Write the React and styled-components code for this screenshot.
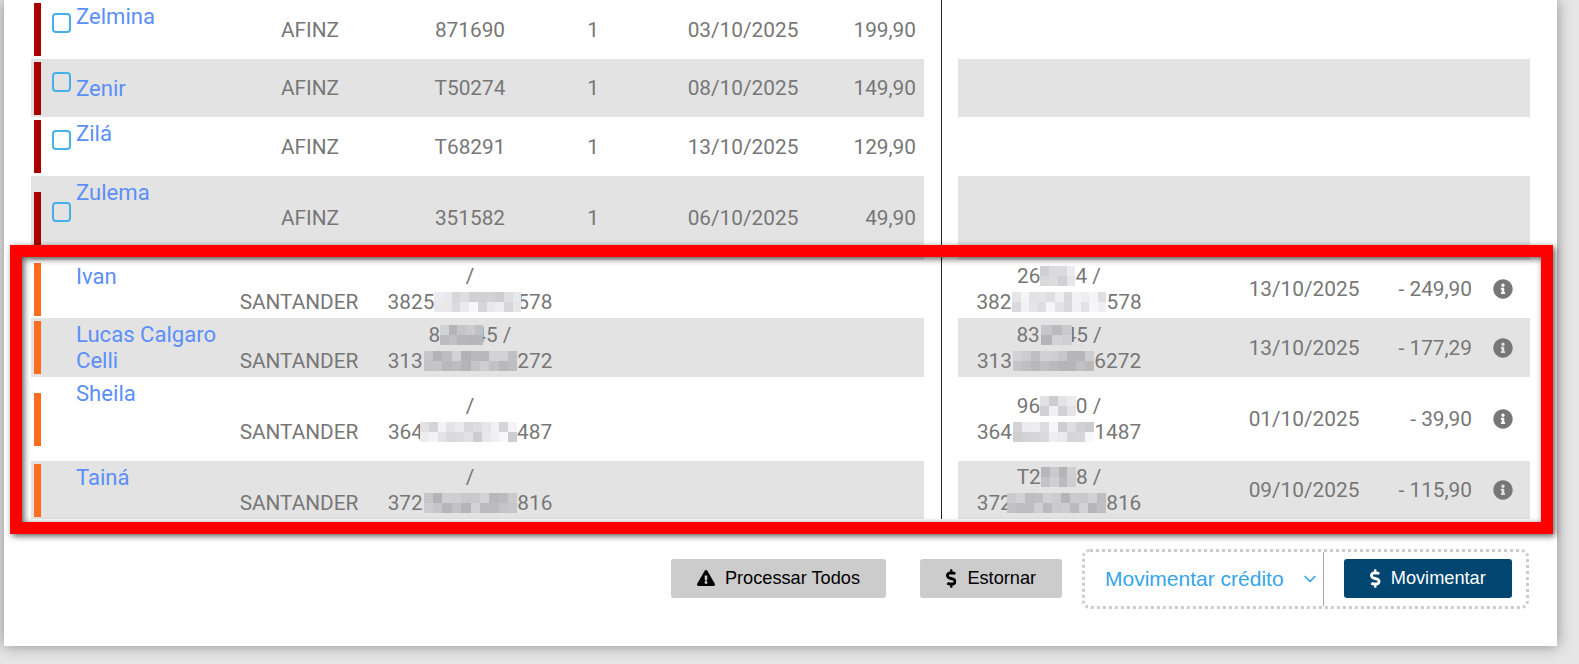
import React from 'react';
import styled, { createGlobalStyle } from 'styled-components';
import { FaExclamationTriangle, FaDollarSign, FaInfoCircle } from 'react-icons/fa';
import { FiChevronDown } from 'react-icons/fi';

const GlobalStyle = createGlobalStyle`
  html, body {
    margin: 0;
    padding: 0;
    height: 664px;
    overflow: hidden;
    background: #e6e6e6;
  }
`;

const Page = styled.div`
  height: 664px;
  padding-left: 4px;
  overflow: hidden;
  box-sizing: border-box;
  background: #e6e6e6;
`;

const Card = styled.div`
  width: 1553px;
  height: 646px;
  padding-left: 27px;
  box-sizing: border-box;
  background: #fff;
  box-shadow: 0 0 14px rgba(0, 0, 0, 0.4);
  font-family: Roboto, 'Liberation Sans', sans-serif;
  font-size: 20.8px;
  line-height: 26px;
  color: #777;
`;

const Rows = styled.div`
  position: relative;
  width: 1499px;
`;

const Row = styled.div`
  display: grid;
  grid-template-columns: 893px 34px 572px;
  height: ${(p) => p.$height}px;
`;

const LeftCell = styled.div`
  display: grid;
  grid-template-columns: 7px 35px 150px 146px 196px 50px 230px 68px;
  padding-left: 3px;
  background: ${(p) => (p.$alt ? '#e3e3e3' : 'transparent')};
`;

const Divider = styled.div`
  margin-left: 17px;
  width: 1px;
  background: #222;
`;

const RightCell = styled.div`
  display: grid;
  grid-template-columns: 202px 224px 88px 58px;
  background: ${(p) => (p.$alt ? '#e3e3e3' : 'transparent')};
`;

const Marker = styled.div`
  align-self: center;
  height: 53px;
  background: ${(p) => p.$color};
`;

const CheckSlot = styled.div`
  padding: ${(p) => p.$top}px 0 0 11px;
`;

const CheckBox = styled.div`
  width: 19px;
  height: 20px;
  box-sizing: border-box;
  border: 2px solid #45b1e8;
  border-radius: 4px;
`;

const Name = styled.a`
  display: block;
  padding-top: ${(p) => p.$top}px;
  color: #5b8ff9;
  font-size: 22.1px;
`;

const Middle = styled.div`
  align-self: center;
  text-align: center;
`;

const BankText = styled(Middle)`
  display: flex;
  justify-content: center;
  align-items: flex-end;
  min-height: ${(p) => p.$lines * 26}px;
  padding-left: ${(p) => (p.$lines === 1 ? 22 : 0)}px;
`;

const DateText = styled(Middle)`
  padding-left: ${(p) => p.$pad}px;
`;

const Value = styled.div`
  align-self: center;
  text-align: right;
  white-space: nowrap;
`;

const InfoSlot = styled.div`
  align-self: center;
  display: flex;
  padding-left: 20.5px;
  font-size: 20px;
  color: #777;
`;

const Line = styled.div`
  white-space: nowrap;
`;

const Mosaic = styled.span`
  display: inline-grid;
  grid-auto-flow: column;
  grid-template-rows: repeat(2, 1fr);
  grid-auto-columns: 1fr;
  position: relative;
  z-index: 1;
  width: ${(p) => p.$w}px;
  height: 20px;
  margin: 3px ${(p) => p.$mr || 0}px 0 ${(p) => p.$ml || 0}px;
  vertical-align: top;
`;

const Frame = styled.div`
  position: absolute;
  left: -21px;
  top: 245px;
  width: 1543px;
  height: 289px;
  box-sizing: border-box;
  border: 12px solid #ff0000;
  filter: drop-shadow(2px 2px 3px rgba(0, 0, 0, 0.65));
  pointer-events: none;
`;

const Footer = styled.div`
  display: flex;
  align-items: center;
  justify-content: flex-end;
  width: 1498px;
  margin-top: 30px;
`;

const Button = styled.button`
  display: flex;
  align-items: center;
  justify-content: center;
  gap: ${(p) => p.$gap}px;
  width: ${(p) => p.$w}px;
  height: 39px;
  margin: 0 ${(p) => p.$mr || 0}px 2px 0;
  padding: 0;
  border: 0;
  border-radius: 3px;
  background: ${(p) => (p.$primary ? '#004670' : '#cccccc')};
  color: ${(p) => (p.$primary ? '#fff' : '#000')};
  font-family: 'Liberation Sans', Arial, sans-serif;
  font-size: 18.2px;
`;

const DollarIcon = styled(FaDollarSign)`
  width: 10.5px;
  height: 19px;
`;

const WarnIcon = styled(FaExclamationTriangle)`
  width: 18px;
  height: 16px;
`;

const Dotted = styled.div`
  display: flex;
  align-items: stretch;
  width: 447px;
  height: 60px;
  box-sizing: border-box;
  border: 3px dotted #cccccc;
  border-radius: 8px;
`;

const SelectBox = styled.div`
  display: flex;
  align-items: center;
  justify-content: space-between;
  width: 239px;
  padding: 0 3px 0 20px;
  box-sizing: border-box;
  border-right: 1px solid #aaa;
  color: #35a6e8;
  font-family: 'Liberation Sans', Arial, sans-serif;
  font-size: 21px;
  svg {
    font-size: 20px;
  }
`;

const ButtonSlot = styled.div`
  display: flex;
  align-items: center;
  padding-left: 20px;
`;

const RED = '#a80000';
const ORANGE = '#ff6c1f';

const m = (w, ml, mr) => ({ w, ml, mr });

const rows = [
  { height: 59, color: RED, check: 13, nameTop: 3, name: 'Zelmina', bank: 'AFINZ', number: [['871690']], qty: '1', date: '03/10/2025', value: '199,90' },
  { height: 58, alt: true, color: RED, check: 13, nameTop: 16, name: 'Zenir', bank: 'AFINZ', number: [['T50274']], qty: '1', date: '08/10/2025', value: '149,90' },
  { height: 59, color: RED, check: 13, nameTop: 3, name: 'Zilá', bank: 'AFINZ', number: [['T68291']], qty: '1', date: '13/10/2025', value: '129,90' },
  { height: 84, alt: true, color: RED, check: 26, nameTop: 3, name: 'Zulema', bank: 'AFINZ', number: [['351582']], qty: '1', date: '06/10/2025', value: '49,90' },
  {
    height: 58, color: ORANGE, nameTop: 3, name: 'Ivan', bank: 'SANTANDER',
    number: [['/'], ['3825', m(87, 0, -4), '578']],
    payment: { number: [['26', m(35), '4 /'], ['382', m(94.5, 0.5, 0), '578']], date: '13/10/2025', value: '- 249,90' },
  },
  {
    height: 59, alt: true, color: ORANGE, nameTop: 3, name: 'Lucas Calgaro Celli', bank: 'SANTANDER',
    number: [['8', m(43, 0, -9), '45 /'], ['313', m(93.6, 1, 0), '272']],
    payment: { number: [['83', m(31, 1.7, -8), '45 /'], ['313', m(81.4, 1), '6272']], date: '13/10/2025', value: '- 177,29' },
  },
  {
    height: 84, color: ORANGE, nameTop: 3, name: 'Sheila', bank: 'SANTANDER',
    number: [['/'], ['364', m(97, -3), '487']],
    payment: { number: [['96', m(35.7, 0, 0), '0 /'], ['364', m(81.4, 1), '1487']], date: '01/10/2025', value: '- 39,90' },
  },
  {
    height: 58, alt: true, color: ORANGE, nameTop: 3, name: 'Tainá', bank: 'SANTANDER',
    number: [['/'], ['372', m(93.6, 1, 0), '816']],
    payment: { number: [['T2', m(34.7, 0.5, 0), '8 /'], ['372', m(99, -4.6, 0), '816']], date: '09/10/2025', value: '- 115,90' },
  },
];

// blurred digits: shades come from a small seeded generator so they stay put between renders
const shade = (seed, dark) => {
  const r = Math.abs(Math.sin(seed * 12.9898) * 43758.5453) % 1;
  const base = dark ? 178 + r * 34 : 204 + r * 44;
  const v = Math.round(base);
  return `rgb(${v}, ${v}, ${v + 2})`;
};

const Blur = ({ part, seed, dark }) => {
  const cols = Math.max(2, Math.round(part.w / 9));
  const tiles = Array.from({ length: cols * 2 }, (_, i) => i);
  return (
    <Mosaic $w={part.w} $ml={part.ml} $mr={part.mr}>
      {tiles.map((i) => (
        <span key={i} style={{ background: shade(seed + i * 1.37, dark) }} />
      ))}
    </Mosaic>
  );
};

const NumberCell = ({ lines, dark, seed }) => (
  <Middle>
    {lines.map((parts, l) => (
      <Line key={l}>
        {parts.map((part, p) =>
          typeof part === 'string' ? (
            <span key={p}>{part}</span>
          ) : (
            <Blur key={p} part={part} dark={dark} seed={seed + l * 7 + 1} />
          )
        )}
      </Line>
    ))}
  </Middle>
);

const TableRow = ({ row, index }) => (
  <Row $height={row.height}>
    <LeftCell $alt={row.alt}>
      <Marker $color={row.color} />
      <CheckSlot $top={row.check}>{row.check && <CheckBox />}</CheckSlot>
      <Name $top={row.nameTop}>{row.name}</Name>
      <BankText $lines={row.number.length}>{row.bank}</BankText>
      <NumberCell lines={row.number} dark={row.alt} seed={index * 3} />
      <Middle>{row.qty}</Middle>
      <DateText $pad={20}>{row.date}</DateText>
      <Value>{row.value}</Value>
    </LeftCell>
    <Divider />
    <RightCell $alt={row.alt}>
      {row.payment && (
        <>
          <NumberCell lines={row.payment.number} dark={row.alt} seed={index * 5 + 40} />
          <DateText $pad={64}>{row.payment.date}</DateText>
          <Value>{row.payment.value}</Value>
          <InfoSlot>
            <FaInfoCircle />
          </InfoSlot>
        </>
      )}
    </RightCell>
  </Row>
);

const App = () => (
  <Page>
    <GlobalStyle />
    <Card>
      <Rows>
        {rows.map((row, i) => (
          <TableRow key={row.name} row={row} index={i} />
        ))}
        <Frame />
      </Rows>
      <Footer>
        <Button $w={215} $gap={10} $mr={34}>
          <WarnIcon />
          Processar Todos
        </Button>
        <Button $w={142} $gap={11} $mr={20}>
          <DollarIcon />
          Estornar
        </Button>
        <Dotted>
          <SelectBox>
            Movimentar crédito
            <FiChevronDown />
          </SelectBox>
          <ButtonSlot>
            <Button $primary $w={168} $gap={10}>
              <DollarIcon />
              Movimentar
            </Button>
          </ButtonSlot>
        </Dotted>
      </Footer>
    </Card>
  </Page>
);

export default App;
